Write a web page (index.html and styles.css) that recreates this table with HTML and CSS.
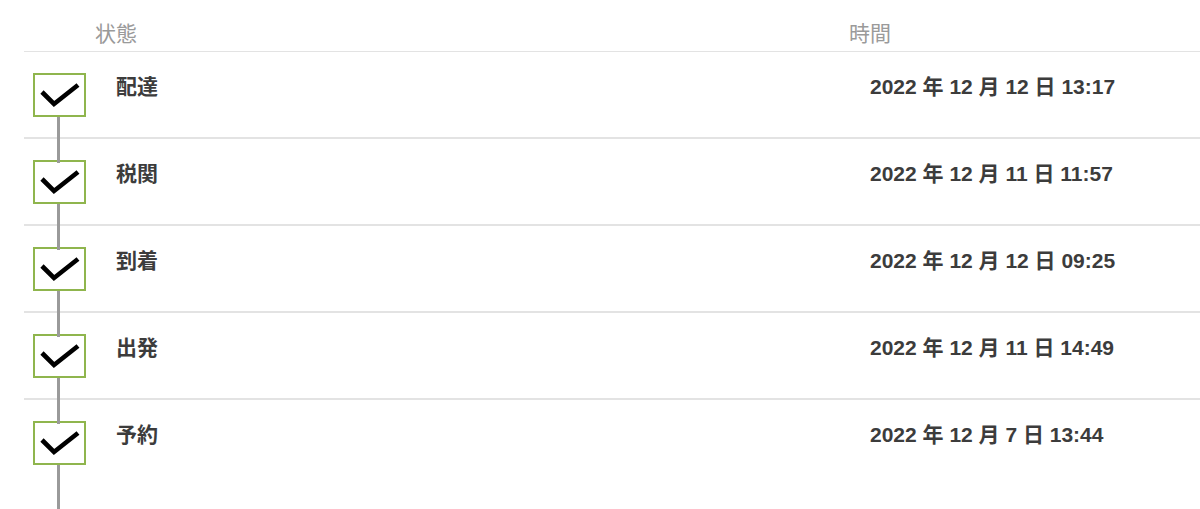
FILE: index.html
```html
<!DOCTYPE html>
<html lang="ja">
<head>
<meta charset="utf-8">
<link rel="stylesheet" href="styles.css">
</head>
<body>
<div class="track">
  <div class="head">
    <div class="h-status">状態</div>
    <div class="h-time">時間</div>
  </div>
  <div class="row">
    <div class="mark"><svg viewBox="0 0 49 40" width="49" height="40"><polyline points="7,17 19,29 43,10" /></svg></div>
    <div class="status">配達</div>
    <div class="time">2022 年 12 月 12 日 13:17</div>
  </div>
  <div class="row">
    <div class="mark"><svg viewBox="0 0 49 40" width="49" height="40"><polyline points="7,17 19,29 43,10" /></svg></div>
    <div class="status">税関</div>
    <div class="time">2022 年 12 月 11 日 11:57</div>
  </div>
  <div class="row">
    <div class="mark"><svg viewBox="0 0 49 40" width="49" height="40"><polyline points="7,17 19,29 43,10" /></svg></div>
    <div class="status">到着</div>
    <div class="time">2022 年 12 月 12 日 09:25</div>
  </div>
  <div class="row">
    <div class="mark"><svg viewBox="0 0 49 40" width="49" height="40"><polyline points="7,17 19,29 43,10" /></svg></div>
    <div class="status">出発</div>
    <div class="time">2022 年 12 月 11 日 14:49</div>
  </div>
  <div class="row last">
    <div class="mark"><svg viewBox="0 0 49 40" width="49" height="40"><polyline points="7,17 19,29 43,10" /></svg></div>
    <div class="status">予約</div>
    <div class="time">2022 年 12 月 7 日 13:44</div>
  </div>
</div>
</body>
</html>
```
FILE: styles.css
```css
html {
  overflow: hidden;
}
html, body {
  margin: 0;
  padding: 0;
  background: #fff;
}
body {
  font-family: "Liberation Sans", Arial, "Noto Sans CJK JP", sans-serif;
  font-size: 21px;
  color: #3c3c3c;
}
.track {
  margin-left: 24px;
  height: 509px;
}
.head {
  display: grid;
  grid-template-columns: 754px 1fr;
  padding-left: 71px;
  height: 52px;
  box-sizing: border-box;
  border-bottom: 1px solid #e3e3e3;
  color: #9a9a9a;
}
.h-status, .h-time {
  padding-top: 21px;
  line-height: 25px;
}
.row {
  display: grid;
  grid-template-columns: 92px 754px 1fr;
  padding: 21px 0 20px;
  border-bottom: 2px solid #e3e3e3;
  height: 44px;
}
.row.last {
  border-bottom: none;
  padding-bottom: 44px;
}
.mark {
  position: relative;
  margin-left: 9px;
  width: 49px;
  height: 40px;
  border: 2px solid #8fb54d;
  background: #fff;
}
.mark svg {
  display: block;
}
.mark polyline {
  fill: none;
  stroke: #000;
  stroke-width: 4.6;
  stroke-linejoin: miter;
}
.mark::after {
  content: "";
  position: absolute;
  left: 22px;
  top: 42px;
  width: 3px;
  height: 46px;
  background: #9a9a9a;
  z-index: 1;
}
.status, .time {
  font-weight: bold;
  line-height: 25px;
  padding-top: 1px;
}
```
